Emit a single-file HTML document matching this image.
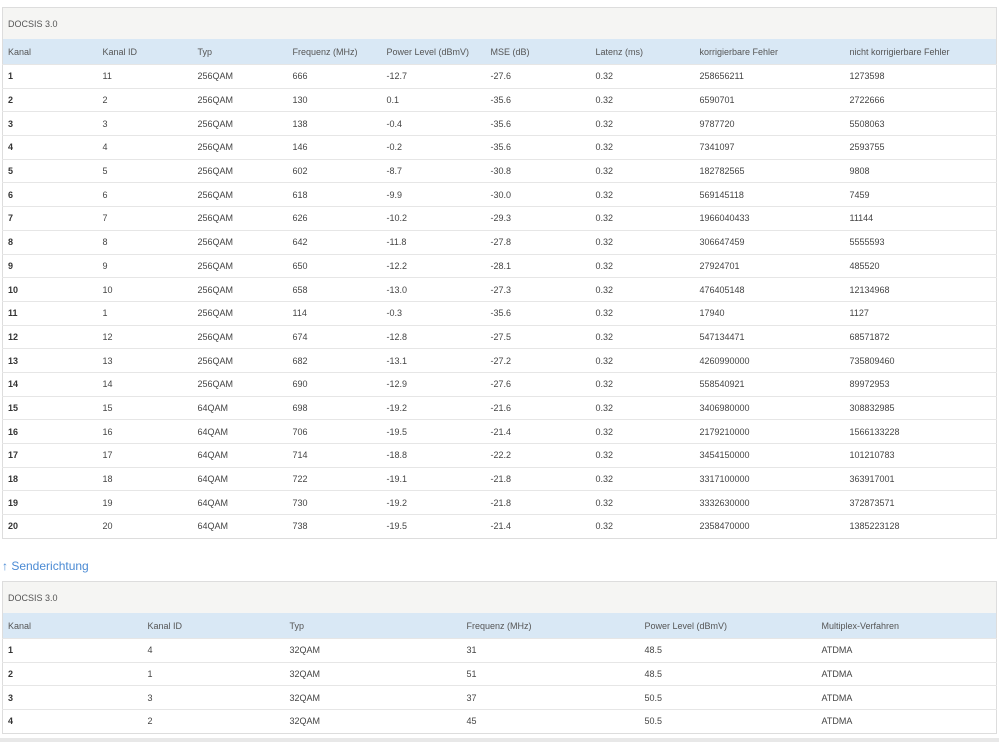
<!DOCTYPE html>
<html><head><meta charset="utf-8"><style>
body{margin:0;background:#fff;font-family:"Liberation Sans",sans-serif;font-size:9px;color:#444;}
.wrap{position:absolute;left:2px;width:995px;}
table{border-collapse:collapse;width:995px;table-layout:fixed;border:1px solid #ddd;}
td,th{padding:0 0 0 5px;text-align:left;font-weight:normal;white-space:nowrap;overflow:hidden;}
.cap td{background:#f5f5f3;height:31px;color:#555;font-size:9px;}
.hd th{background:#d9e8f5;height:25px;color:#555;font-size:9px;}
tr.r td{height:22.7px;border-top:1px solid #e6e6e6;}
tr.r td:first-child{font-weight:bold;color:#333;}
.link{position:absolute;left:2px;top:559px;color:#4a8ad4;font-size:12px;}
</style></head><body>
<div class="wrap" style="top:7px">
<table>
<colgroup><col style="width:95px"><col style="width:95px"><col style="width:95px"><col style="width:94px"><col style="width:104px"><col style="width:105px"><col style="width:104px"><col style="width:150px"><col></colgroup>
<tr class="cap"><td colspan="9">DOCSIS 3.0</td></tr>
<tr class="hd"><th>Kanal</th><th>Kanal ID</th><th>Typ</th><th>Frequenz (MHz)</th><th>Power Level (dBmV)</th><th>MSE (dB)</th><th>Latenz (ms)</th><th>korrigierbare Fehler</th><th>nicht korrigierbare Fehler</th></tr>
<tr class="r"><td>1</td><td>11</td><td>256QAM</td><td>666</td><td>-12.7</td><td>-27.6</td><td>0.32</td><td>258656211</td><td>1273598</td></tr>
<tr class="r"><td>2</td><td>2</td><td>256QAM</td><td>130</td><td>0.1</td><td>-35.6</td><td>0.32</td><td>6590701</td><td>2722666</td></tr>
<tr class="r"><td>3</td><td>3</td><td>256QAM</td><td>138</td><td>-0.4</td><td>-35.6</td><td>0.32</td><td>9787720</td><td>5508063</td></tr>
<tr class="r"><td>4</td><td>4</td><td>256QAM</td><td>146</td><td>-0.2</td><td>-35.6</td><td>0.32</td><td>7341097</td><td>2593755</td></tr>
<tr class="r"><td>5</td><td>5</td><td>256QAM</td><td>602</td><td>-8.7</td><td>-30.8</td><td>0.32</td><td>182782565</td><td>9808</td></tr>
<tr class="r"><td>6</td><td>6</td><td>256QAM</td><td>618</td><td>-9.9</td><td>-30.0</td><td>0.32</td><td>569145118</td><td>7459</td></tr>
<tr class="r"><td>7</td><td>7</td><td>256QAM</td><td>626</td><td>-10.2</td><td>-29.3</td><td>0.32</td><td>1966040433</td><td>11144</td></tr>
<tr class="r"><td>8</td><td>8</td><td>256QAM</td><td>642</td><td>-11.8</td><td>-27.8</td><td>0.32</td><td>306647459</td><td>5555593</td></tr>
<tr class="r"><td>9</td><td>9</td><td>256QAM</td><td>650</td><td>-12.2</td><td>-28.1</td><td>0.32</td><td>27924701</td><td>485520</td></tr>
<tr class="r"><td>10</td><td>10</td><td>256QAM</td><td>658</td><td>-13.0</td><td>-27.3</td><td>0.32</td><td>476405148</td><td>12134968</td></tr>
<tr class="r"><td>11</td><td>1</td><td>256QAM</td><td>114</td><td>-0.3</td><td>-35.6</td><td>0.32</td><td>17940</td><td>1127</td></tr>
<tr class="r"><td>12</td><td>12</td><td>256QAM</td><td>674</td><td>-12.8</td><td>-27.5</td><td>0.32</td><td>547134471</td><td>68571872</td></tr>
<tr class="r"><td>13</td><td>13</td><td>256QAM</td><td>682</td><td>-13.1</td><td>-27.2</td><td>0.32</td><td>4260990000</td><td>735809460</td></tr>
<tr class="r"><td>14</td><td>14</td><td>256QAM</td><td>690</td><td>-12.9</td><td>-27.6</td><td>0.32</td><td>558540921</td><td>89972953</td></tr>
<tr class="r"><td>15</td><td>15</td><td>64QAM</td><td>698</td><td>-19.2</td><td>-21.6</td><td>0.32</td><td>3406980000</td><td>308832985</td></tr>
<tr class="r"><td>16</td><td>16</td><td>64QAM</td><td>706</td><td>-19.5</td><td>-21.4</td><td>0.32</td><td>2179210000</td><td>1566133228</td></tr>
<tr class="r"><td>17</td><td>17</td><td>64QAM</td><td>714</td><td>-18.8</td><td>-22.2</td><td>0.32</td><td>3454150000</td><td>101210783</td></tr>
<tr class="r"><td>18</td><td>18</td><td>64QAM</td><td>722</td><td>-19.1</td><td>-21.8</td><td>0.32</td><td>3317100000</td><td>363917001</td></tr>
<tr class="r"><td>19</td><td>19</td><td>64QAM</td><td>730</td><td>-19.2</td><td>-21.8</td><td>0.32</td><td>3332630000</td><td>372873571</td></tr>
<tr class="r"><td>20</td><td>20</td><td>64QAM</td><td>738</td><td>-19.5</td><td>-21.4</td><td>0.32</td><td>2358470000</td><td>1385223128</td></tr>
</table></div>
<div class="link">↑ Senderichtung</div>
<div class="wrap" style="top:581px">
<table>
<colgroup><col style="width:140px"><col style="width:142px"><col style="width:177px"><col style="width:178px"><col style="width:177px"><col></colgroup>
<tr class="cap"><td colspan="6">DOCSIS 3.0</td></tr>
<tr class="hd"><th>Kanal</th><th>Kanal ID</th><th>Typ</th><th>Frequenz (MHz)</th><th>Power Level (dBmV)</th><th>Multiplex-Verfahren</th></tr>
<tr class="r"><td>1</td><td>4</td><td>32QAM</td><td>31</td><td>48.5</td><td>ATDMA</td></tr>
<tr class="r"><td>2</td><td>1</td><td>32QAM</td><td>51</td><td>48.5</td><td>ATDMA</td></tr>
<tr class="r"><td>3</td><td>3</td><td>32QAM</td><td>37</td><td>50.5</td><td>ATDMA</td></tr>
<tr class="r"><td>4</td><td>2</td><td>32QAM</td><td>45</td><td>50.5</td><td>ATDMA</td></tr>
</table></div>
<div style="position:absolute;left:0;top:738px;width:999px;height:4px;background:#e8e8e8"></div>
</body></html>
